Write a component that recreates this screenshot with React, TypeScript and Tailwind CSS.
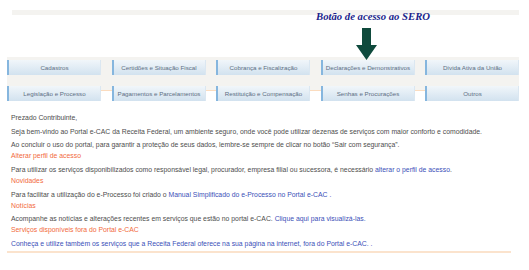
import React from 'react'

const row1 = ['Cadastros', 'Certidões e Situação Fiscal', 'Cobrança e Fiscalização', 'Declarações e Demonstrativos', 'Dívida Ativa da União']
const row2 = ['Legislação e Processo', 'Pagamentos e Parcelamentos', 'Restituição e Compensação', 'Senhas e Procurações', 'Outros']

const MenuButton: React.FC<{ label: string }> = ({ label }) => (
  <div className="h-[15px] flex items-center justify-center border-l-2 border-[#86b6de] border-r border-r-[#dbe7f1] bg-gradient-to-b from-[#f1f6fa] to-[#d2e2ef] text-[6.2px] text-[#5d6f83] whitespace-nowrap">
    {label}
  </div>
)

const App: React.FC = () => {
  return (
    <div className="relative w-[529px] h-[270px] bg-white overflow-hidden font-['Liberation_Sans',Arial,sans-serif]">
      {/* top strip */}
      <div className="mt-[10px] ml-[12px] w-[507px] h-[5px] bg-[#f4f3f0]"></div>

      {/* annotation */}
      <div className="absolute left-[316px] top-[9px] text-[10.7px] leading-[14px] font-bold italic text-[#1b1f8c] font-['Liberation_Serif',serif] whitespace-nowrap">
        Botão de acesso ao SERO
      </div>
      <svg className="absolute left-[356px] top-[28px]" width="22" height="33" viewBox="0 0 22 33">
        <path d="M6 0 H15 V17 H21 L10.5 32 L0 17 H6 Z" fill="#0f4a3c" />
      </svg>

      {/* menu */}
      <div className="mt-[42px] ml-[7px] w-[512px] h-[43px] pt-[3px] bg-[linear-gradient(to_bottom,#f4f3f0_0px,#f4f3f0_33px,#fbdcbf_33px,#fbdcbf_34px,transparent_34px)]">
        <div className="grid grid-cols-[94px_94px_94px_94px_94px] gap-x-[10.5px]">
          {row1.map((l) => (
            <MenuButton key={l} label={l} />
          ))}
        </div>
        <div className="mt-[11px] grid grid-cols-[94px_94px_94px_94px_94px] gap-x-[10.5px]">
          {row2.map((l) => (
            <MenuButton key={l} label={l} />
          ))}
        </div>
      </div>

      {/* content */}
      <div className="mt-[12px] ml-[7px] w-[504px] pl-[4px] text-[6.85px] leading-[11px] text-[#4d4d4d] whitespace-nowrap">
        <div>Prezado Contribuinte,</div>
        <div className="mt-[3px]">
          Seja bem-vindo ao Portal e-CAC da Receita Federal, um ambiente seguro, onde você pode utilizar dezenas de serviços com maior conforto e comodidade.
        </div>
        <div className="mt-[1.5px]">
          Ao concluir o uso do portal, para garantir a proteção de seus dados, lembre-se sempre de clicar no botão “Sair com segurança”.
        </div>
        <div className="text-[#f26a3c]">Alterar perfil de acesso</div>
        <div className="mt-[3px]">
          Para utilizar os serviços disponibilizados como responsável legal, procurador, empresa filial ou sucessora, é necessário{' '}
          <span className="text-[#3b4fb8]">alterar o perfil de acesso</span>.
        </div>
        <div className="text-[#f26a3c]">Novidades</div>
        <div className="mt-[3px]">
          Para facilitar a utilização do e-Processo foi criado o{' '}
          <span className="text-[#3b4fb8]">Manual Simplificado do e-Processo no Portal e-CAC .</span>
        </div>
        <div className="text-[#f26a3c]">Notícias</div>
        <div className="mt-[2px]">
          Acompanhe as notícias e alterações recentes em serviços que estão no portal e-CAC.{' '}
          <span className="text-[#3b4fb8]">Clique aqui para visualizá-las.</span>
        </div>
        <div className="text-[#f26a3c]">Serviços disponíveis fora do Portal e-CAC</div>
        <div className="mt-[3px] text-[#3b4fb8]">
          Conheça e utilize também os serviços que a Receita Federal oferece na sua página na internet, fora do Portal e-CAC. .
        </div>
        <div className="mt-[2px] -ml-[4px] h-[2px] bg-[#fbe3cd]"></div>
      </div>
    </div>
  )
}

export default App
